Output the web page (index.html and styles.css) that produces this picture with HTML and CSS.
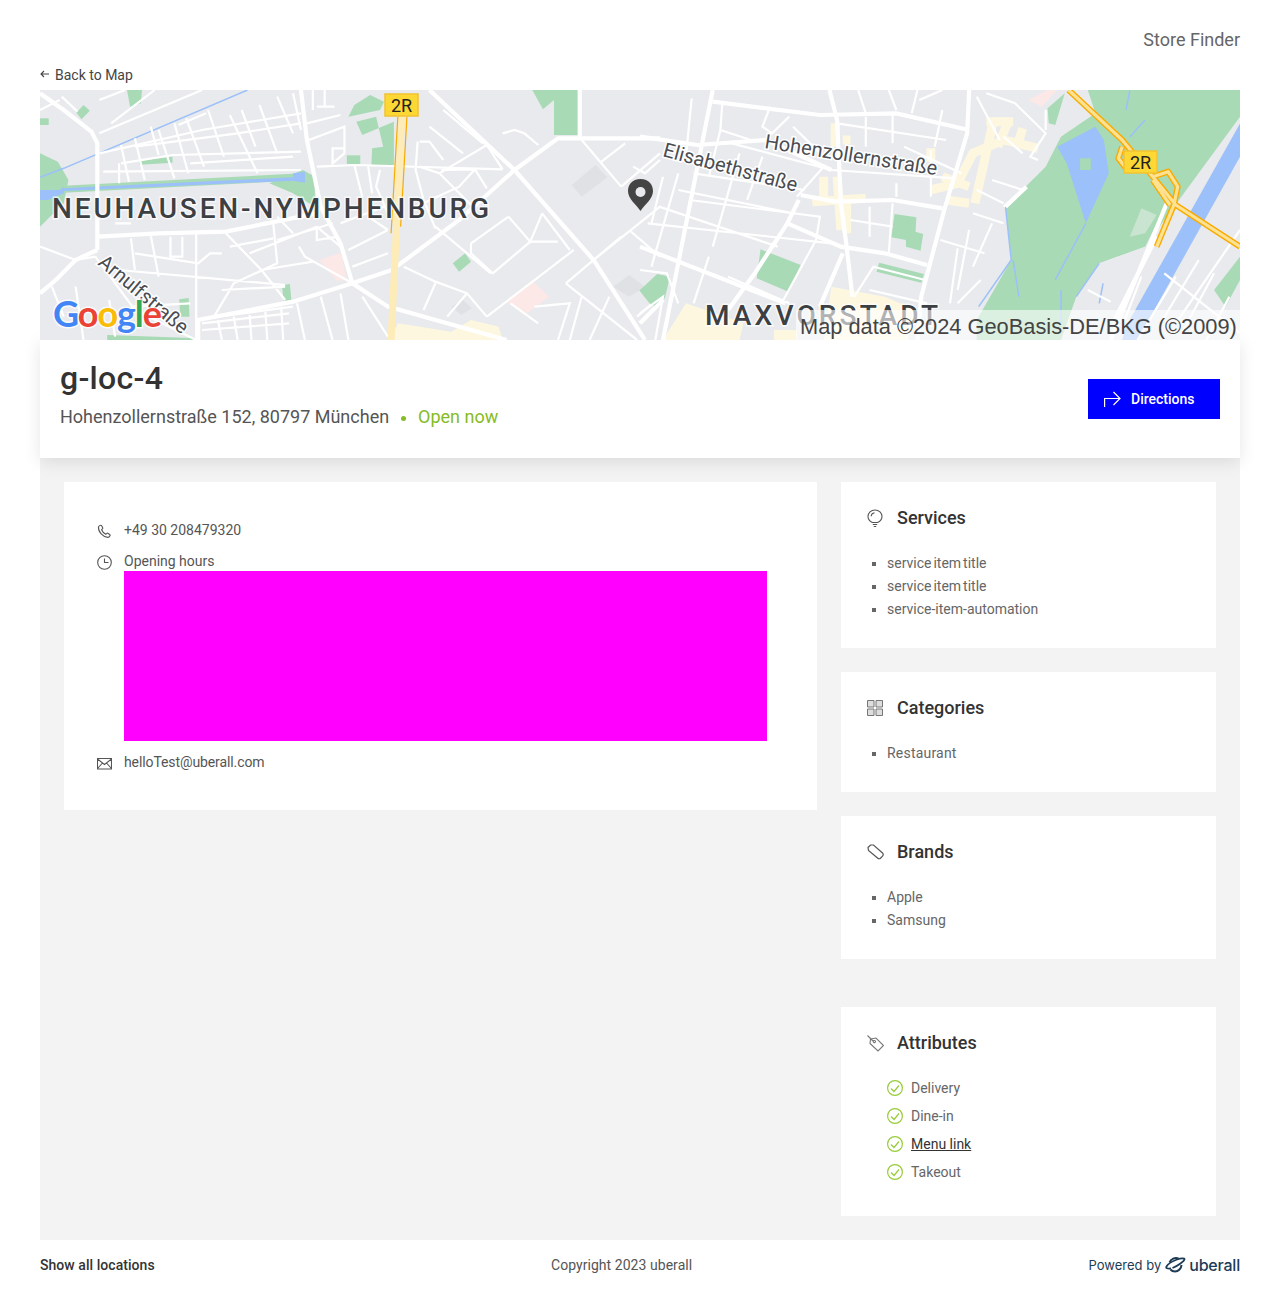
FILE: index.html
```html
<!DOCTYPE html>
<html>
<head>
    <title>Store Finder</title>
    <link rel="stylesheet" href="styles.css">
</head>
<body>

<div class="page">
    <header class="top">Store Finder</header>

    <a class="back" href="#">
        <svg width="9" height="8" viewBox="0 0 9 8"><path d="M4 1 1 4l3 3M1 4h8" fill="none" stroke="#444" stroke-width="1.100"/></svg>
        Back to Map
    </a>

    <div class="map">
        <svg class="map-svg" viewBox="0 0 1200 250" width="1200" height="250">
            <rect width="1200" height="250" fill="#e8eaed"/>

            <!-- left half, traced at 2.529 x 3 -->
            <g transform="scale(.3954 .3333)">
                <g fill="#a8dab5">
                    <path d="M0,190 L45,215 L72,270 L60,340 L0,410Z"/>
                    <path d="M220,0 L258,0 L255,40 L228,50Z"/>
                    <path d="M110,45 L126,62 L105,88 L92,68Z"/>
                    <path d="M0,85 H22 V105 H0Z"/>
                    <path d="M835,15 L870,35 L860,60 L780,80 L795,45Z"/>
                    <path d="M800,95 L850,80 L868,170 L840,175 L838,228 L895,228 L895,95 L815,135Z"/>
                    <path d="M776,196 H810 V222 H776Z"/>
                    <path d="M1245,0 H1368 V135 H1300 V30 L1272,58Z"/>
                    <path d="M252,212 L335,200 L335,218 L252,224Z"/>
                    <path d="M580,280 L665,240 L695,260 L695,350 L640,310Z"/>
                    <path d="M1075,490 L1090,515 L1060,545 L1044,520Z"/>
                    <path d="M612,585 L632,582 L636,632 L616,632Z"/>
                    <path d="M352,628 L376,624 L378,680 L355,680Z"/>
                    <path d="M1515,600 L1568,560 V650 L1545,645Z"/>
                    <path d="M170,735 L400,745 L400,750 H170Z"/>
                </g>
                <g fill="#fce8e6">
                    <path d="M706,510 L762,488 L775,570 L750,572Z"/>
                    <path d="M1178,635 L1245,572 L1288,620 L1232,670Z"/>
                </g>
                <g fill="#dfe1e5">
                    <path d="M1345,285 L1405,225 L1435,262 L1370,320Z"/>
                    <path d="M1450,590 L1490,555 L1530,590 L1490,620Z"/>
                    <path d="M1040,650 L1070,630 L1092,655 L1065,675Z"/>
                </g>
                <path d="M905,700 L1040,725 L1090,690 L1160,710 L1170,750 H885Z" fill="#fef7e0"/>
                <path d="M60,298 L640,262" fill="none" stroke="#a8dab5" stroke-width="7" vector-effect="non-scaling-stroke"/>
                <path d="M0,300 H50 L60,290 V310 L20,330 H0Z" fill="#9cc0f9"/>
                <path d="M0,262 L60,235 L525,0" fill="none" stroke="#9cc0f9" stroke-width="1.500" vector-effect="non-scaling-stroke"/>
                <path d="M55,295 L640,262 L640,250 L670,245 V278 L640,272 L60,303Z" fill="#9cc0f9"/>

                <g fill="none" stroke="#fff" stroke-width="2.200">
                    <path vector-effect="non-scaling-stroke" d="M150,130 L410,0 M205,165 L225,275 M240,145 L265,270 M300,120 L340,265 M370,85 L415,230 M425,60 L465,200 M480,75 L550,250 M555,45 L600,190 M600,20 L640,130 M55,20 L95,65 M280,110 L300,195 M340,100 L375,250 M510,60 L545,170 M640,10 L660,120 M150,30 L215,0 M180,100 L290,0 M0,60 L50,30"/>
                    <path vector-effect="non-scaling-stroke" d="M205,220 L335,195 L660,185 M150,190 L410,120 L660,70 M240,170 L500,130 L660,100 M160,245 L660,240 M350,105 L420,70 M200,220 V280 M700,50 L745,50 M675,100 L760,75 M680,150 L770,110 L770,190 L740,220 V175 H770 M380,220 L640,200 M690,0 V60 M720,0 V50"/>
                    <path vector-effect="non-scaling-stroke" d="M700,230 L800,225 L1170,238 M795,225 L815,320 M830,230 L840,310 M860,240 L850,290 L880,370 M955,155 L950,240 L970,330 L1000,415 M960,155 H985 L1020,210 M1010,250 L1090,345 M1100,238 L1130,295 M1060,100 L1120,160 M1020,60 L1090,130 M985,110 L1070,190 M960,230 L1010,250 L1130,165 L1170,238 M1015,240 L1100,238 L1060,290 L950,350 M1170,130 L1200,120 L1225,130 L1260,165 M760,400 L870,350 M700,415 L740,400"/>
                    <path vector-effect="non-scaling-stroke" d="M230,445 L240,540 M330,440 V500 H360 V440 M280,435 L300,560 M395,430 V750 M240,490 L400,520 L430,490 L460,490 M470,430 L560,540 L620,630 M590,400 L600,520 L490,580 L440,680 M530,490 L700,410 L760,470 M600,450 L700,415 L700,450 L755,440 M655,470 L670,500 L790,580 M560,540 L690,515 M780,480 L880,420 M790,530 L880,490 M200,540 L620,585 M460,600 L620,590 M230,650 L380,640 M0,470 L90,510 L140,500 M140,500 L240,660 L395,750 M30,590 L60,680 M175,630 L190,740 M90,590 L110,750 M450,680 L640,650 M190,400 L230,400 M480,470 L590,445 M640,430 L600,380 M880,420 L830,380"/>
                    <path vector-effect="non-scaling-stroke" d="M920,530 L1000,575 L1080,610 L1130,680 M1000,410 L1140,550 M1090,460 L1185,380 M1090,460 V490 L1145,550 L1240,455 H1310 M1185,380 L1240,455 L1270,370 M1270,370 L1340,480 M1130,680 L1350,480 M1000,580 L970,660 M1080,610 L1030,680 M1400,510 L1568,350 M1490,420 L1568,500 M1330,580 L1470,440 M1330,580 L1510,750 M1250,650 L1340,640 L1310,750 M1370,620 L1340,750 M1440,620 L1390,750 M1510,680 L1568,620 M1370,150 L1470,290 M1420,215 L1480,160 M1500,230 L1530,250 L1568,210 M1470,290 L1568,190 M815,620 L880,740 M1190,640 L1260,700"/>
                    <path vector-effect="non-scaling-stroke" d="M450,690 L460,750 M490,680 L500,750 M530,675 L535,750 M570,665 L575,750 M610,650 L615,750 M650,640 L670,750 M710,620 L740,750 M760,610 L780,750 M410,700 L630,670 M410,720 L630,700"/>
                </g>
                <g fill="none" stroke="#fff" stroke-width="4.200">
                    <path vector-effect="non-scaling-stroke" d="M0,10 L60,60 L130,125 L145,160 V480 M145,480 L90,510 L40,570 L0,610 M145,440 L300,430 L470,425 L700,370"/>
                    <path vector-effect="non-scaling-stroke" d="M660,0 L675,150 L710,350 L760,460 L790,580 L880,650 L1180,750"/>
                    <path vector-effect="non-scaling-stroke" d="M400,750 V690 L640,635 L790,580 L890,540 L1060,390 L1200,240 L1310,145 H1568"/>
                    <path vector-effect="non-scaling-stroke" d="M985,0 L1200,240 L1400,510 L1530,750 M1365,0 V140"/>
                </g>
                <path d="M915,80 L888,750" fill="none" stroke="#fdecb8" stroke-width="7" vector-effect="non-scaling-stroke"/>
                <path d="M905,80 L888,430 M928,80 L912,410" fill="none" stroke="#f9ab00" stroke-width="1.200" vector-effect="non-scaling-stroke"/>
            </g>

            <!-- right half, traced at 2.613 x 3 -->
            <g transform="translate(600 0) scale(.3827 .3333)">
                <path d="M1100,140 L1190,70 L1170,0 H1568 V80 L1370,390 L1320,470 L1200,520 L1140,620 L1100,750 H880 V690 L970,510 L955,350 L1060,230Z" fill="#a8dab5"/>
                <path d="M1568,100 V200 L1300,750 H1250Z" fill="#9cc0f9"/>
                <path d="M1090,170 L1190,110 L1222,70 L1190,110 L1212,150 L1225,250 L1165,400 L1115,220Z" fill="#9cc0f9"/>
                <path d="M1150,205 H1178 V240 H1150Z" fill="#a8dab5"/>
                <path d="M1200,520 L1320,470 L1350,400 L1260,750 H1140 L1160,600Z" fill="#e8eaed"/>
                <path d="M1280,440 L1310,355 L1350,375 L1320,430Z" fill="#c9e4d0"/>
                <path d="M1568,230 V750 H1300Z" fill="#e8eaed"/>
                <path d="M955,350 L970,510 L885,650 M1165,400 L1085,570 M1100,600 L1100,700 M975,510 L990,620 M1280,0 L1270,60 M1320,90 L1280,140 M1200,520 L1140,620 M1210,580 L1200,640" fill="none" stroke="#9cc0f9" stroke-width="1.500" vector-effect="non-scaling-stroke"/>
                <g fill="#a8dab5">
                    <path d="M665,372 L722,382 L720,425 L740,432 L733,482 L695,470 V450 L657,442Z"/>
                    <path d="M315,478 L420,525 L388,605 L305,565Z"/>
                    <path d="M625,518 L742,552 L735,578 L618,545Z"/>
                    <path d="M0,600 L45,552 L78,560 L65,625 L30,645Z"/>
                    <path d="M1065,55 L1110,10 L1085,105 L1068,100Z"/>
                    <path d="M1500,600 L1568,500 V570 L1530,650Z"/>
                </g>
                <path d="M1015,30 L1065,0 H1090 L1050,50Z" fill="#fce8e6"/>
                <g fill="none" stroke="#fef7e0" stroke-width="9">
                    <path vector-effect="non-scaling-stroke" d="M1040,175 L950,150 L870,190 L830,280 L760,300 M925,85 L875,340 M965,85 L935,170 M1000,115 L985,170 M760,175 V215 M905,95 H975 M800,330 L860,340 M790,260 L860,290"/>
                    <path vector-effect="non-scaling-stroke" d="M510,100 V170 M480,260 V320 M450,335 L590,325 M515,260 L525,420 M540,330 V430 M460,165 V180 M530,150 H550"/>
                </g>
                <path d="M500,590 L640,620 L720,660 L700,750 H480Z" fill="#fef7e0"/>
                <path d="M120,640 L270,700 L260,750 H60Z" fill="#fef7e0"/>
                <path d="M350,720 H410 V750 H350Z" fill="#fef7e0"/>
                <g fill="none" stroke="#fff" stroke-width="2.200">
                    <path vector-effect="non-scaling-stroke" d="M135,25 L120,200 M215,40 L210,120 L290,150 M340,50 L320,110 L345,130 L390,80 M400,110 L480,200 M590,80 V170 M660,70 V160 M725,0 L710,70 M790,60 L770,170 M880,20 L940,150 M905,10 L980,40 L1060,130 L1020,200 L1040,210 M730,30 L790,0 M950,140 L1000,190 M1060,60 V120 M515,100 L800,150 M690,170 L840,250 M920,270 L1000,300 L950,350 M880,300 L950,340 M570,0 L590,70 M650,0 L670,60"/>
                    <path vector-effect="non-scaling-stroke" d="M240,160 L500,240 L825,265 M140,250 L430,300 M100,300 L400,370 M130,330 L470,380 L460,450 M50,350 L360,470 M20,400 L500,460 M100,250 L30,530 M260,190 L190,470 M415,330 L350,470 M480,230 L410,320 M600,350 V440 M670,280 V320 M660,340 L650,490 M760,180 V320 M550,390 L660,410 M785,450 L900,490 M830,475 L810,640 M860,420 L830,600 M920,400 L870,530 M870,370 L950,400 M890,570 L830,640 M0,540 L70,550 L100,640 M230,560 L390,640 M460,450 L370,640 M560,620 L610,530 L745,570 M600,600 L750,640 M180,500 L140,640 M0,670 L60,620 L40,750 M60,260 L30,400 M210,120 L180,260 M320,200 L280,330"/>
                    <path vector-effect="non-scaling-stroke" d="M1370,550 L1568,730 M1400,560 L1300,750 M1460,510 L1360,700 M1500,550 L1420,720 M1540,620 L1480,750 M1170,600 L1230,635 M1310,560 L1260,710 M1568,420 L1400,700"/>
                </g>
                <g fill="none" stroke="#fff" stroke-width="4.200">
                    <path vector-effect="non-scaling-stroke" d="M0,140 L150,165 L330,150 L500,240 M190,35 L470,75 L670,70 L860,120 M190,0 L60,750 M495,0 L515,90 L525,340 L540,470 L555,620 M860,0 L855,130 L795,360 L735,620 L725,750"/>
                    <path vector-effect="non-scaling-stroke" d="M420,315 L510,335 L660,330 L790,355 M385,400 L525,470 L640,490 L750,525 M0,470 L380,640 M415,330 L385,400 L300,550 L230,660 M530,490 L470,650 M0,700 L60,630"/>
                    <path vector-effect="non-scaling-stroke" d="M1350,440 L1240,690 M1380,330 L1230,750 M1010,290 L955,350"/>
                </g>
                <g fill="none" stroke-linejoin="round">
                    <path vector-effect="non-scaling-stroke" stroke="#f9ab00" stroke-width="6" d="M1120,0 L1260,150 L1340,260 L1400,345 L1568,470 M1340,260 L1380,245 L1405,290 L1395,345 L1350,470 M1340,270 L1385,345 M1260,170 L1250,205 L1270,235"/>
                    <path vector-effect="non-scaling-stroke" stroke="#fde293" stroke-width="3.200" d="M1120,0 L1260,150 L1340,260 L1400,345 L1568,470 M1340,260 L1380,245 L1405,290 L1395,345 L1350,470 M1340,270 L1385,345 M1260,170 L1250,205 L1270,235"/>
                </g>
            </g>

            <!-- shields -->
            <g class="shield">
                <rect x="345" y="4" width="33" height="22" fill="#fdd835" stroke="#f2c230" stroke-width="1.500"/>
                <text x="361.500" y="21.500" text-anchor="middle">2R</text>
                <rect x="1084" y="61" width="33" height="22" fill="#fdd835" stroke="#f2c230" stroke-width="1.500"/>
                <text x="1100.500" y="78.500" text-anchor="middle">2R</text>
            </g>

            <!-- pin -->
            <path d="M600.500,89 C592,89 588,95 588,101 C588,109 596,114 600.500,121 C605,114 613,109 613,101 C613,95 609,89 600.500,89Z" fill="#444"/>
            <circle cx="600.500" cy="102" r="5" fill="#e8eaed"/>

            <text class="district neuhausen" x="12" y="127.500">NEUHAUSEN-NYMPHENBURG</text>
            <text class="district" x="665" y="235">MAXVORSTADT</text>

            <text class="street" transform="translate(57 174) rotate(40)">Arnulfstraße</text>
            <text class="street" transform="translate(622 66) rotate(15)">Elisabethstraße</text>
            <text class="street" transform="translate(724 58) rotate(9)">Hohenzollernstraße</text>

            <text class="google" x="13" y="237"><tspan fill="#4285f4">G</tspan><tspan fill="#ea4335">o</tspan><tspan fill="#fbbc05">o</tspan><tspan fill="#4285f4">g</tspan><tspan fill="#34a853">l</tspan><tspan fill="#ea4335">e</tspan></text>

            <rect x="756" y="220" width="444" height="30" fill="#fff" fill-opacity=".6"/>
            <text class="credit" x="760" y="243.500">Map data ©2024 GeoBasis-DE/BKG (©2009)</text>
        </svg>
    </div>

    <div class="summary">
        <div>
            <h1>g-loc-4</h1>
            <p class="address">Hohenzollernstraße 152, 80797 München <span class="dot"></span> <span class="open">Open now</span></p>
        </div>
        <a class="directions" href="#">
            <svg width="18" height="18" viewBox="0 0 18 18"><path d="M.6 17V8.500H16M9.500 2l6.500 6.500-6.500 6.500" fill="none" stroke="#fff" stroke-width="1.200"/></svg>
            Directions
        </a>
    </div>

    <div class="content">
        <div class="contact">
            <div class="contact-row">
                <svg width="15" height="15" viewBox="0 0 15 15"><path d="M1.500 2.800C2 2 3 1.200 3.800 1.200c.5 0 .8.300 1 .7l.9 1.800c.2.400.1.800-.2 1.100l-.9.9c.7 1.800 2.200 3.500 4.200 4.600l1-.9c.3-.3.800-.3 1.100-.1l1.800 1.100c.4.200.6.700.4 1.100-.4.900-1.300 1.900-2.300 1.900C6 13 1 8 1.500 2.800Z" fill="none" stroke="#555" stroke-width="1.100"/></svg>
                <span>+49 30 208479320</span>
            </div>
            <div class="contact-row">
                <svg width="15" height="15" viewBox="0 0 15 15"><circle cx="7.500" cy="7.500" r="6.800" fill="none" stroke="#555" stroke-width="1.100"/><path d="M7.500 3.500v4h4" fill="none" stroke="#555" stroke-width="1.100"/></svg>
                <div class="hours-block">
                    <span>Opening hours</span>
                    <div class="hours"></div>
                </div>
            </div>
            <div class="contact-row">
                <svg width="15" height="15" viewBox="0 0 15 15"><path d="M.5 2.500h14v10.500H.5zM.5 3l7 5.500 7-5.500M.5 12.500 5.500 7M14.500 12.500 9.500 7" fill="none" stroke="#555" stroke-width="1.100"/></svg>
                <span class="email">helloTest@uberall.com</span>
            </div>
        </div>

        <div class="side">
            <section class="box">
                <h3>
                    <svg width="16" height="19" viewBox="0 0 16 19"><path d="M5.300 13.500C3 12.300 1 10.300 1 7.500 1 3.800 4 1 8 1s7 2.800 7 6.500c0 2.800-2 4.800-4.300 6ZM5.800 15.500h4.400M6.800 17.500h2.400M4.200 7.200C4.300 5.300 5.700 4 7.500 3.700" fill="none" stroke="#555" stroke-width="1.100"/></svg>
                    Services
                </h3>
                <ul class="services">
                    <li>service item title</li>
                    <li>service item title</li>
                    <li>service-item-automation</li>
                </ul>
            </section>

            <section class="box">
                <h3>
                    <svg width="16" height="16" viewBox="0 0 16 16"><g fill="#ddd" stroke="#777" stroke-width="1"><path d="M.5.500H7V7H.5zM9 .500h6.500V7H9zM.5 9H7v6.500H.5zM9 9h6.500v6.500H9z"/></g></svg>
                    Categories
                </h3>
                <ul class="categories">
                    <li>Restaurant</li>
                </ul>
            </section>

            <section class="box">
                <h3>
                    <svg width="17" height="16" viewBox="0 0 17 16"><path d="M1 3.500 3.500 1h3L15.500 9c1 1 1 2.200 0 3.200l-1.800 1.800c-1 1-2.200 1-3.200 0L1.500 6.500Z" fill="none" stroke="#555" stroke-width="1.200"/></svg>
                    Brands
                </h3>
                <ul>
                    <li>Apple</li>
                    <li>Samsung</li>
                </ul>
            </section>

            <section class="box attributes">
                <h3>
                    <svg width="17" height="17" viewBox="0 0 17 17"><path d="M3.500 4 9 3l7.500 7.500-5.500 5.500L3 8.500ZM6.300 6.600a1.100 1.100 0 1 0 0-.1M6 6 .5.500" fill="none" stroke="#777" stroke-width="1.100"/></svg>
                    Attributes
                </h3>
                <div class="attribute">
                    <svg width="16" height="16" viewBox="0 0 16 16"><circle cx="8" cy="8" r="7.400" fill="none" stroke="#97cc3a" stroke-width="1.200"/><path d="M4 8.500l3 3 5-6" fill="none" stroke="#97cc3a" stroke-width="1.200"/></svg>
                    <span>Delivery</span>
                </div>
                <div class="attribute">
                    <svg width="16" height="16" viewBox="0 0 16 16"><circle cx="8" cy="8" r="7.400" fill="none" stroke="#97cc3a" stroke-width="1.200"/><path d="M4 8.500l3 3 5-6" fill="none" stroke="#97cc3a" stroke-width="1.200"/></svg>
                    <span>Dine-in</span>
                </div>
                <div class="attribute">
                    <svg width="16" height="16" viewBox="0 0 16 16"><circle cx="8" cy="8" r="7.400" fill="none" stroke="#97cc3a" stroke-width="1.200"/><path d="M4 8.500l3 3 5-6" fill="none" stroke="#97cc3a" stroke-width="1.200"/></svg>
                    <a href="#">Menu link</a>
                </div>
                <div class="attribute">
                    <svg width="16" height="16" viewBox="0 0 16 16"><circle cx="8" cy="8" r="7.400" fill="none" stroke="#97cc3a" stroke-width="1.200"/><path d="M4 8.500l3 3 5-6" fill="none" stroke="#97cc3a" stroke-width="1.200"/></svg>
                    <span>Takeout</span>
                </div>
            </section>
        </div>
    </div>

    <footer class="bottom">
        <a class="all" href="#">Show all locations</a>
        <span class="copyright">Copyright 2023 uberall</span>
        <span class="powered">
            Powered by
            <svg class="planet" width="21" height="18" viewBox="0 0 21 18"><path d="M6 12.500C2 13 .5 12 1.500 10.500 3 8 8 5 12 3.500c4-1.300 8-1.500 7.500 0-.3 1-2 2.500-4 4-2.500 1.800-5.500 3.500-8 4.500" fill="none" stroke="#1d3b55" stroke-width="1.800"/><path d="M4.500 6.500C6 3 10 1 13.500 2.500M16.500 9c-.2 3.500-3 6.500-6.500 6.500-2 0-3.500-.8-4.500-2" fill="none" stroke="#1d3b55" stroke-width="2"/></svg>
            <b>uberall</b>
        </span>
    </footer>
</div>

</body>
</html>
```

FILE: styles.css
```css
body {
    font-family: Roboto, sans-serif;
    margin: 0;
    padding: 0;
    background: #fff;
    color: #555;
}
a {
    color: inherit;
    text-decoration: none;
}
.page {
    padding: 0 40px 20px;
}
.top {
    height: 60px;
    padding-top: 29px;
    box-sizing: border-box;
    text-align: right;
    font-size: 18px;
    line-height: 22px;
    color: #666;
}
.back {
    display: flex;
    align-items: center;
    gap: 6px;
    height: 30px;
    font-size: 14px;
    color: #444;
}
.back svg {
    margin-top: -2px;
}
.map {
    height: 250px;
    overflow: hidden;
    position: relative;
    z-index: 1;
}
.map-svg {
    display: block;
}
.shield text {
    font-family: Roboto, sans-serif;
    font-size: 18px;
    fill: #222;
}
.district {
    font-family: Roboto, sans-serif;
    font-size: 28px;
    font-weight: 500;
    letter-spacing: 3.1px;
    fill: #3c4043;
    stroke: #fff;
    stroke-width: 3px;
    stroke-opacity: .7;
    paint-order: stroke;
}
.neuhausen {
    letter-spacing: 2.85px;
}
.street {
    font-family: Roboto, sans-serif;
    font-size: 20px;
    fill: #4a4d52;
    stroke: #fff;
    stroke-width: 3px;
    paint-order: stroke;
}
.google {
    font-family: Lato, sans-serif;
    font-size: 36px;
    font-weight: 700;
    letter-spacing: -1.100px;
    stroke: #fff;
    stroke-width: 3px;
    stroke-opacity: .8;
    paint-order: stroke;
}
.credit {
    font-family: "Liberation Sans", sans-serif;
    font-size: 21.800px;
    fill: #444;
}
.summary {
    display: flex;
    justify-content: space-between;
    align-items: center;
    height: 118px;
    box-sizing: border-box;
    padding: 0 20px;
    background: #fff;
    box-shadow: 0 4px 16px rgba(0, 0, 0, 0.1);
    position: relative;
}
.summary > div {
    margin-top: -10px;
}
h1 {
    margin: 0;
    font-size: 32px;
    line-height: 38px;
    font-weight: 500;
    letter-spacing: .3px;
    color: #333;
}
.address {
    margin: 8px 0 0;
    font-size: 18px;
    line-height: 24px;
    color: #555;
}
.dot {
    display: inline-block;
    width: 5px;
    height: 5px;
    margin: 0 8px 2px 7px;
    border-radius: 50%;
    background: #86bc25;
}
.open {
    color: #86bc25;
}
.directions {
    display: flex;
    align-items: center;
    gap: 9px;
    box-sizing: border-box;
    width: 132px;
    height: 40px;
    padding-left: 16px;
    background: #00f;
    color: #fff;
    font-size: 14px;
    font-weight: 500;
}
.content {
    display: flex;
    align-items: flex-start;
    gap: 24px;
    padding: 24px;
    background: #f3f3f3;
}
.contact {
    width: 753px;
    box-sizing: border-box;
    padding: 38px 50px 38px 33px;
    background: #fff;
    font-size: 14px;
    line-height: 20px;
    display: flex;
    flex-direction: column;
    gap: 11px;
}
.contact-row {
    display: flex;
    gap: 12px;
    align-items: flex-start;
}
.contact-row svg {
    flex: none;
    margin-top: 4px;
}
.hours-block {
    flex: 1;
}
.hours {
    height: 170px;
    background: #f0f;
}
.email {
    letter-spacing: -.1px;
}
.side {
    width: 375px;
    display: flex;
    flex-direction: column;
    gap: 24px;
}
.box {
    background: #fff;
    padding: 24px 26px 27px;
}
.box h3 {
    display: flex;
    align-items: center;
    margin: 0 0 22px;
    font-size: 18px;
    line-height: 24px;
    font-weight: 500;
    color: #333;
}
.box h3 svg {
    flex: none;
    margin-right: 14px;
}
.box h3 svg[width="17"] {
    margin-right: 13px;
}
.box ul {
    margin: 0;
    padding-left: 20px;
    list-style: square;
    font-size: 14px;
    line-height: 23px;
    color: #666;
}
.box .services li {
    word-spacing: -1.500px;
}
.box .categories li {
    letter-spacing: .2px;
}
.attributes {
    margin-top: 24px;
    padding-bottom: 30px;
}
.attributes h3 {
    margin-bottom: 19px;
}
.attribute {
    display: flex;
    align-items: center;
    gap: 8px;
    height: 28px;
    padding-left: 20px;
    font-size: 14px;
    color: #666;
}
.attribute a {
    color: #333;
    text-decoration: underline;
}
.bottom {
    display: flex;
    justify-content: space-between;
    align-items: center;
    height: 50px;
    font-size: 14px;
    letter-spacing: .05px;
}
.all {
    font-weight: 500;
    color: #333;
}
.powered {
    display: flex;
    align-items: center;
    gap: 4px;
    font-family: Inter, sans-serif;
    font-size: 13px;
    letter-spacing: 0;
    color: #1d3b55;
}
.planet {
    margin-right: -1px;
}
.powered b {
    font-size: 16px;
    font-weight: 500;
    letter-spacing: -.2px;
}
```
